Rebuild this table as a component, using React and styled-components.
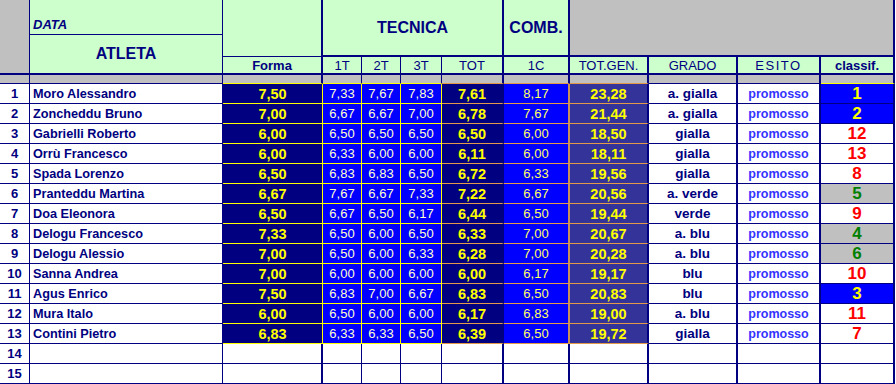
import React from 'react';
import styled, { createGlobalStyle } from 'styled-components';

const NAVY = '#000080';
const YEL = '#FFFF00';
const ORG = '#E39A48';
const GREEN_BG = '#CCFFCC';
const GRAY = '#C0C0C0';

const Global = createGlobalStyle`
  html, body { margin: 0; padding: 0; background: #ffffff; }
  body { font-family: "Liberation Sans", Arial, sans-serif; }
`;

const COLS = [30, 193, 100, 39, 39, 41, 62, 66, 79, 89, 83, 74];
const RIGHT = [1, 1, 2, 1, 1, 1, 2, 2, 2, 2, 2, 2];

const Sheet = styled.div`
  display: grid;
  grid-template-columns: ${COLS.map((c) => `${c}px`).join(' ')};
  grid-template-rows: 35px 22px 18px 9px repeat(15, 20px);
  width: 895px;
`;

const Cell = styled.div`
  box-sizing: border-box;
  display: flex;
  align-items: center;
  justify-content: center;
  overflow: hidden;
  white-space: nowrap;
  grid-column: ${(p) => p.$col || 'auto'};
  grid-row: ${(p) => p.$row || 'auto'};
  border-right: ${(p) => (p.$rw ?? 1)}px solid ${(p) => p.$rc || NAVY};
  border-bottom: ${(p) => (p.$bw ?? 1)}px solid ${(p) => p.$bc || NAVY};
  background: ${(p) => p.$bg || '#ffffff'};
  color: ${NAVY};
`;

const HeadCell = styled(Cell)`
  background: ${GREEN_BG};
`;

const GrayBlock = styled(Cell)`
  background: ${GRAY};
`;

const Title = styled.span`
  font-weight: bold;
  font-size: 16px;
  color: ${NAVY};
`;

const DateCell = styled(HeadCell)`
  justify-content: flex-start;
  align-items: flex-end;
  padding: 0 0 2px 3px;
  font-style: italic;
  font-weight: bold;
  font-size: 13px;
`;

const Label = styled(HeadCell)`
  font-size: 13px;
  font-weight: ${(p) => (p.$bold ? 'bold' : 'normal')};
  letter-spacing: ${(p) => p.$spacing || 0};
`;

const RowNum = styled(Cell)`
  font-weight: bold;
  font-size: 13px;
`;

const NameCell = styled(Cell)`
  justify-content: flex-start;
  padding-left: 3px;
  font-weight: bold;
  font-size: 12.7px;
`;

const ScoreCell = styled(Cell)`
  font-size: ${(p) => (p.$strong ? '14.5px' : '13px')};
  font-weight: ${(p) => (p.$strong ? 'bold' : 'normal')};
  color: ${(p) => p.$fg};
`;

const GradeCell = styled(Cell)`
  font-weight: bold;
  font-size: 13.5px;
`;

const ResultCell = styled(Cell)`
  font-weight: bold;
  font-size: 12.5px;
  color: #3333ff;
`;

const RankCell = styled(Cell)`
  font-weight: bold;
  font-size: 17px;
  color: ${(p) => p.$fg};
`;

const DATA = [
  ['Moro Alessandro', '7,50', '7,33', '7,67', '7,83', '7,61', '8,17', '23,28', 'a. gialla', '1', 'top'],
  ['Zoncheddu Bruno', '7,00', '6,67', '6,67', '7,00', '6,78', '7,67', '21,44', 'a. gialla', '2', 'top'],
  ['Gabrielli Roberto', '6,00', '6,50', '6,50', '6,50', '6,50', '6,00', '18,50', 'gialla', '12', 'red'],
  ['Orrù Francesco', '6,00', '6,33', '6,00', '6,00', '6,11', '6,00', '18,11', 'gialla', '13', 'red'],
  ['Spada Lorenzo', '6,50', '6,83', '6,83', '6,50', '6,72', '6,33', '19,56', 'gialla', '8', 'red'],
  ['Pranteddu Martina', '6,67', '7,67', '6,67', '7,33', '7,22', '6,67', '20,56', 'a. verde', '5', 'green'],
  ['Doa Eleonora', '6,50', '6,67', '6,50', '6,17', '6,44', '6,50', '19,44', 'verde', '9', 'red'],
  ['Delogu Francesco', '7,33', '6,50', '6,00', '6,50', '6,33', '7,00', '20,67', 'a. blu', '4', 'green'],
  ['Delogu Alessio', '7,00', '6,50', '6,00', '6,33', '6,28', '7,00', '20,28', 'a. blu', '6', 'green'],
  ['Sanna Andrea', '7,00', '6,00', '6,00', '6,00', '6,00', '6,17', '19,17', 'blu', '10', 'red'],
  ['Agus Enrico', '7,50', '6,83', '7,00', '6,67', '6,83', '6,50', '20,83', 'blu', '3', 'top'],
  ['Mura Italo', '6,00', '6,50', '6,00', '6,00', '6,17', '6,83', '19,00', 'a. blu', '11', 'red'],
  ['Contini Pietro', '6,83', '6,33', '6,33', '6,50', '6,39', '6,50', '19,72', 'gialla', '7', 'red'],
];

const RANK_STYLE = {
  top: { bg: '#0000FF', fg: YEL },
  red: { bg: '#ffffff', fg: '#FF0000' },
  green: { bg: GRAY, fg: '#008000' },
};

// score column specs: index in row, bg, fg, strong, right border color, bottom border color
const SCORE_COLS = [
  { bg: NAVY, fg: YEL, strong: true, rc: YEL, rw: 1, bc: YEL },
  { bg: '#0000FF', fg: '#FFFFCC', rc: YEL, rw: 1, bc: YEL },
  { bg: '#0000FF', fg: '#FFFFCC', rc: YEL, rw: 1, bc: YEL },
  { bg: '#0000FF', fg: '#FFFFCC', rc: YEL, rw: 1, bc: YEL },
  { bg: NAVY, fg: YEL, strong: true, rc: NAVY, rw: 2, bc: ORG },
  { bg: '#0000FF', fg: '#FFFF66', rc: '#C89058', rw: 2, bc: ORG },
  { bg: '#333399', fg: YEL, strong: true, rc: NAVY, rw: 2, bc: ORG },
];

const GRAY_ROW_BOTTOM = [NAVY, NAVY, YEL, YEL, YEL, YEL, ORG, ORG, ORG, NAVY, NAVY, YEL];

function DataRow({ n, row }) {
  const [name, ...rest] = row;
  const scores = rest.slice(0, 7);
  const grade = rest[7];
  const rank = rest[8];
  const rs = RANK_STYLE[rest[9]];
  return (
    <>
      <RowNum $rw={1}>{n}</RowNum>
      <NameCell $rw={1}>{name}</NameCell>
      {scores.map((v, i) => {
        const s = SCORE_COLS[i];
        return (
          <ScoreCell key={i} $bg={s.bg} $fg={s.fg} $strong={s.strong} $rc={s.rc} $rw={s.rw} $bc={s.bc}>
            {v}
          </ScoreCell>
        );
      })}
      <GradeCell $rw={2}>{grade}</GradeCell>
      <ResultCell $rw={2}>promosso</ResultCell>
      <RankCell $rw={2} $bg={rs.bg} $fg={rs.fg}>{rank}</RankCell>
    </>
  );
}

function EmptyRow({ n }) {
  return (
    <>
      <RowNum $rw={1}>{n}</RowNum>
      {COLS.slice(1).map((_, i) => (
        <Cell key={i} $rw={RIGHT[i + 1]} />
      ))}
    </>
  );
}

export default function App() {
  return (
    <>
      <Global />
      <Sheet>
        <GrayBlock $col="1" $row="1 / 4" $rw={1} $bw={2} />
        <DateCell $col="2" $row="1" $rw={1} $bw={1}>DATA</DateCell>
        <HeadCell $col="2" $row="2 / 4" $rw={1} $bw={2}>
          <Title>ATLETA</Title>
        </HeadCell>
        <HeadCell $col="3" $row="1 / 3" $rw={2} $bw={1} />
        <HeadCell $col="4 / 8" $row="1 / 3" $rw={2} $bw={2}>
          <Title>TECNICA</Title>
        </HeadCell>
        <HeadCell $col="8" $row="1 / 3" $rw={2} $bw={2}>
          <Title>COMB.</Title>
        </HeadCell>
        <GrayBlock $col="9 / 13" $row="1 / 3" $rw={2} $bw={2} />

        <Label $col="3" $row="3" $rw={2} $bw={2} $bold>Forma</Label>
        <Label $col="4" $row="3" $rw={1} $bw={2}>1T</Label>
        <Label $col="5" $row="3" $rw={1} $bw={2}>2T</Label>
        <Label $col="6" $row="3" $rw={1} $bw={2}>3T</Label>
        <Label $col="7" $row="3" $rw={2} $bw={2}>TOT</Label>
        <Label $col="8" $row="3" $rw={2} $bw={2}>1C</Label>
        <Label $col="9" $row="3" $rw={2} $bw={2}>TOT.GEN.</Label>
        <Label $col="10" $row="3" $rw={2} $bw={2}>GRADO</Label>
        <Label $col="11" $row="3" $rw={2} $bw={2} $spacing="1.5px">ESITO</Label>
        <Label $col="12" $row="3" $rw={2} $bw={2} $bold>classif.</Label>

        {COLS.map((_, i) => (
          <GrayBlock key={`g${i}`} $row="4" $col={`${i + 1}`} $rw={RIGHT[i]} $bc={GRAY_ROW_BOTTOM[i]} />
        ))}

        {DATA.map((row, i) => (
          <DataRow key={i} n={i + 1} row={row} />
        ))}
        <EmptyRow n={14} />
        <EmptyRow n={15} />
      </Sheet>
    </>
  );
}
